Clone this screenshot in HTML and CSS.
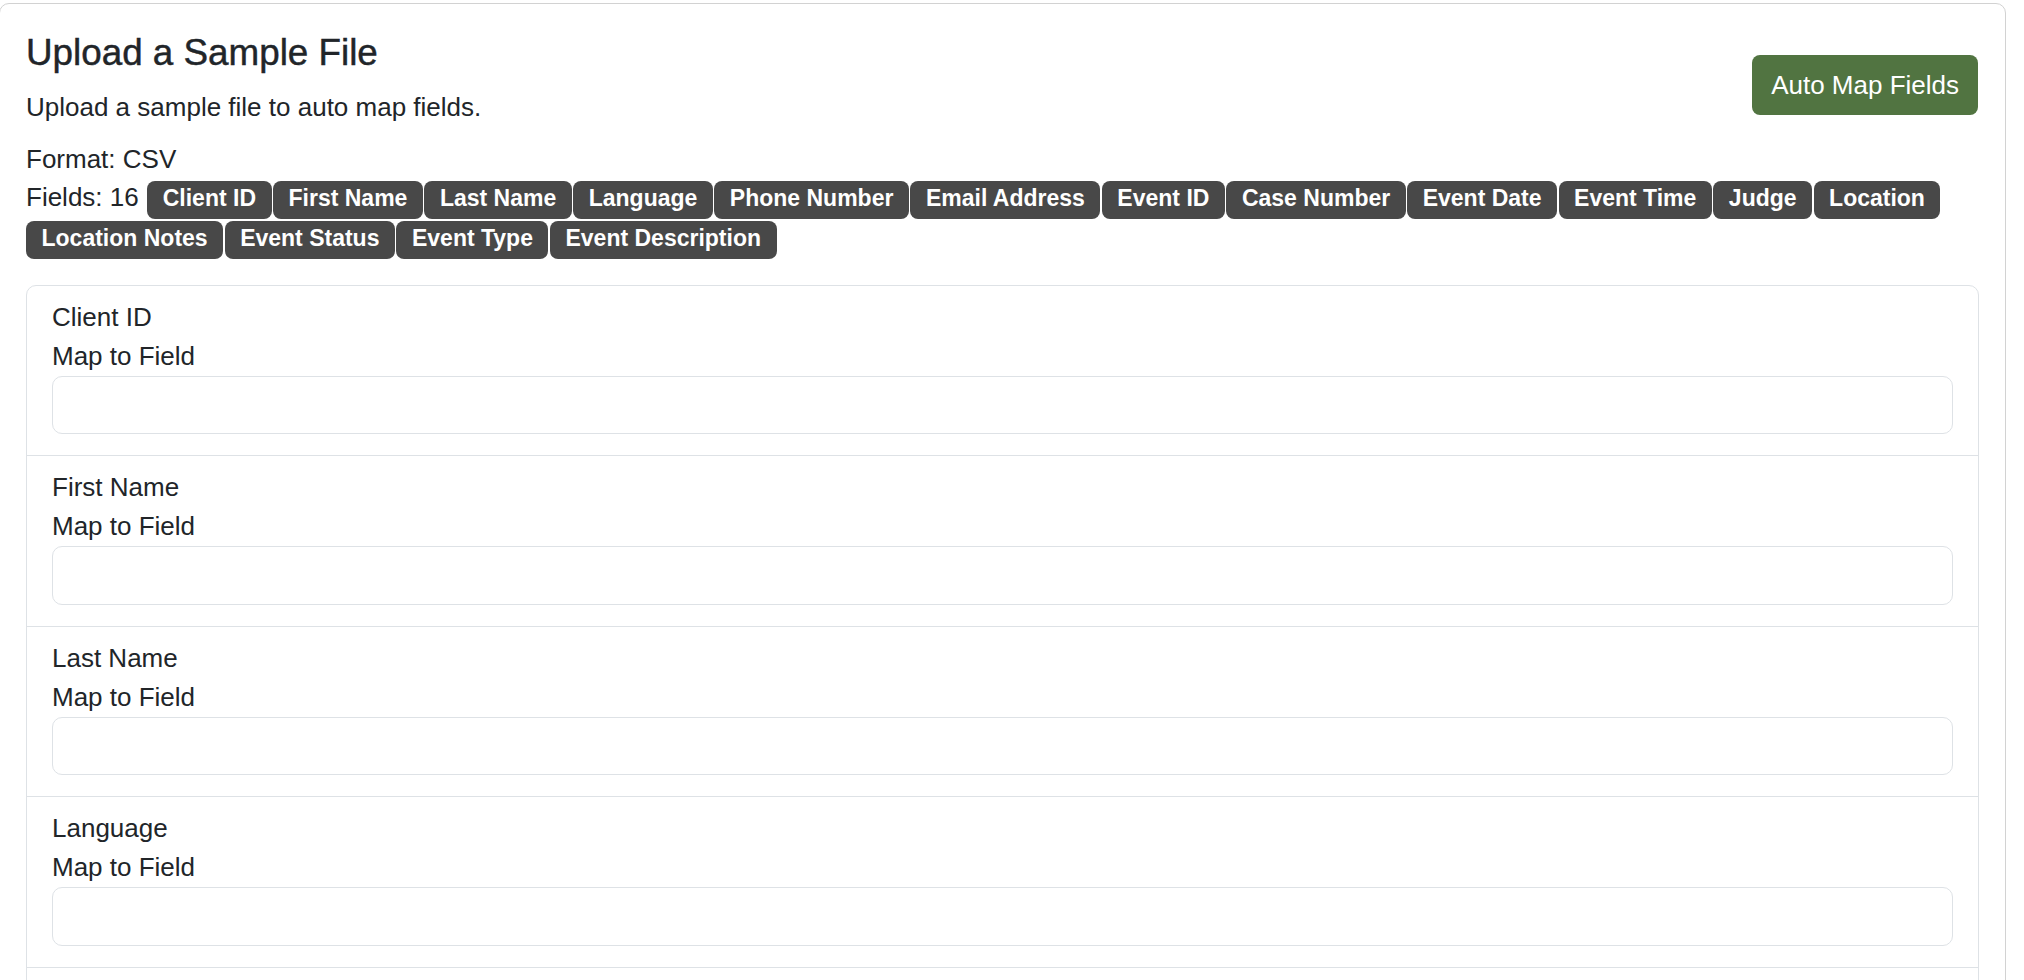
FILE: index.html
```html
<!DOCTYPE html>
<html lang="en">
<head>
<meta charset="utf-8">
<title>Upload a Sample File</title>
<link rel="stylesheet" href="styles.css">
</head>
<body>
<div class="card">
  <div class="card-header-row">
    <div class="intro">
      <h3 class="title">Upload a Sample File</h3>
      <p class="lead-text">Upload a sample file to auto map fields.</p>
    </div>
    <button class="btn-auto" type="button">Auto Map Fields</button>
  </div>
  <div class="format">Format: CSV</div>
  <div class="fields">
    <span class="fields-label">Fields: 16</span>
    <span class="badge">Client ID</span>
    <span class="badge">First Name</span>
    <span class="badge">Last Name</span>
    <span class="badge">Language</span>
    <span class="badge">Phone Number</span>
    <span class="badge">Email Address</span>
    <span class="badge">Event ID</span>
    <span class="badge">Case Number</span>
    <span class="badge">Event Date</span>
    <span class="badge">Event Time</span>
    <span class="badge">Judge</span>
    <span class="badge">Location</span>
    <span class="badge">Location Notes</span>
    <span class="badge">Event Status</span>
    <span class="badge">Event Type</span>
    <span class="badge">Event Description</span>
  </div>
  <ul class="map-list">
    <li class="map-item"><div class="field-name">Client ID</div><label class="map-label">Map to Field</label><input class="map-input" type="text"></li>
    <li class="map-item"><div class="field-name">First Name</div><label class="map-label">Map to Field</label><input class="map-input" type="text"></li>
    <li class="map-item"><div class="field-name">Last Name</div><label class="map-label">Map to Field</label><input class="map-input" type="text"></li>
    <li class="map-item"><div class="field-name">Language</div><label class="map-label">Map to Field</label><input class="map-input" type="text"></li>
    <li class="map-item"><div class="field-name">Phone Number</div><label class="map-label">Map to Field</label><input class="map-input" type="text"></li>
  </ul>
</div>
</body>
</html>
```

FILE: styles.css
```css
* { box-sizing: border-box; }

html, body {
  margin: 0;
  padding: 0;
  background: #ffffff;
}

body {
  font-family: "Liberation Sans", Arial, Helvetica, sans-serif;
  font-size: 26px;
  line-height: 39px;
  color: #212529;
}

.card {
  margin: 3px 0 0 -1px;
  width: 2007px;
  border: 1px solid #d2d2d2;
  border-radius: 10px;
  padding: 27px 26px 26px 26px;
  background: #ffffff;
}

.card-header-row {
  display: flex;
  justify-content: space-between;
  align-items: flex-start;
}

.title {
  margin: 0 0 13px 0;
  font-size: 36.8px;
  line-height: 44px;
  font-weight: 500;
  -webkit-text-stroke: 0.45px #212529;
}

.lead-text {
  margin: 0 0 13px 0;
}

.btn-auto {
  margin-top: 24px;
  margin-right: 1px;
  height: 60px;
  padding: 0 19px;
  border: none;
  border-radius: 8px;
  background: #517441;
  color: #ffffff;
  font-family: "Liberation Sans", Arial, Helvetica, sans-serif;
  font-size: 26px;
  line-height: 39px;
}

.fields {
  margin-top: 2px;
  display: flex;
  flex-wrap: wrap;
  align-items: baseline;
  gap: 1.5px 1.5px;
}

.fields-label {
  line-height: 26px;
  margin-right: 7px;
}

.badge {
  display: inline-block;
  height: 38px;
  padding: 0 15.5px 3px;
  line-height: 35px;
  font-size: 23px;
  font-weight: 700;
  color: #ffffff;
  background: #484848;
  border-radius: 8px;
  white-space: nowrap;
}

.map-list {
  list-style: none;
  margin: 26px 0 0 0;
  padding: 0;
  border: 1px solid #dee2e6;
  border-radius: 10px;
}

.map-item {
  padding: 12px 25px 21px;
  border-top: 1px solid #dee2e6;
}

.map-item:first-child {
  border-top: none;
}

.field-name,
.map-label {
  display: block;
  line-height: 39px;
}

.map-input {
  display: block;
  width: 100%;
  height: 58.5px;
  margin: 0;
  border: 1px solid #dee2e6;
  border-radius: 10px;
  background: #ffffff;
  font-family: "Liberation Sans", Arial, Helvetica, sans-serif;
  font-size: 26px;
  padding: 0 19px;
}
```
